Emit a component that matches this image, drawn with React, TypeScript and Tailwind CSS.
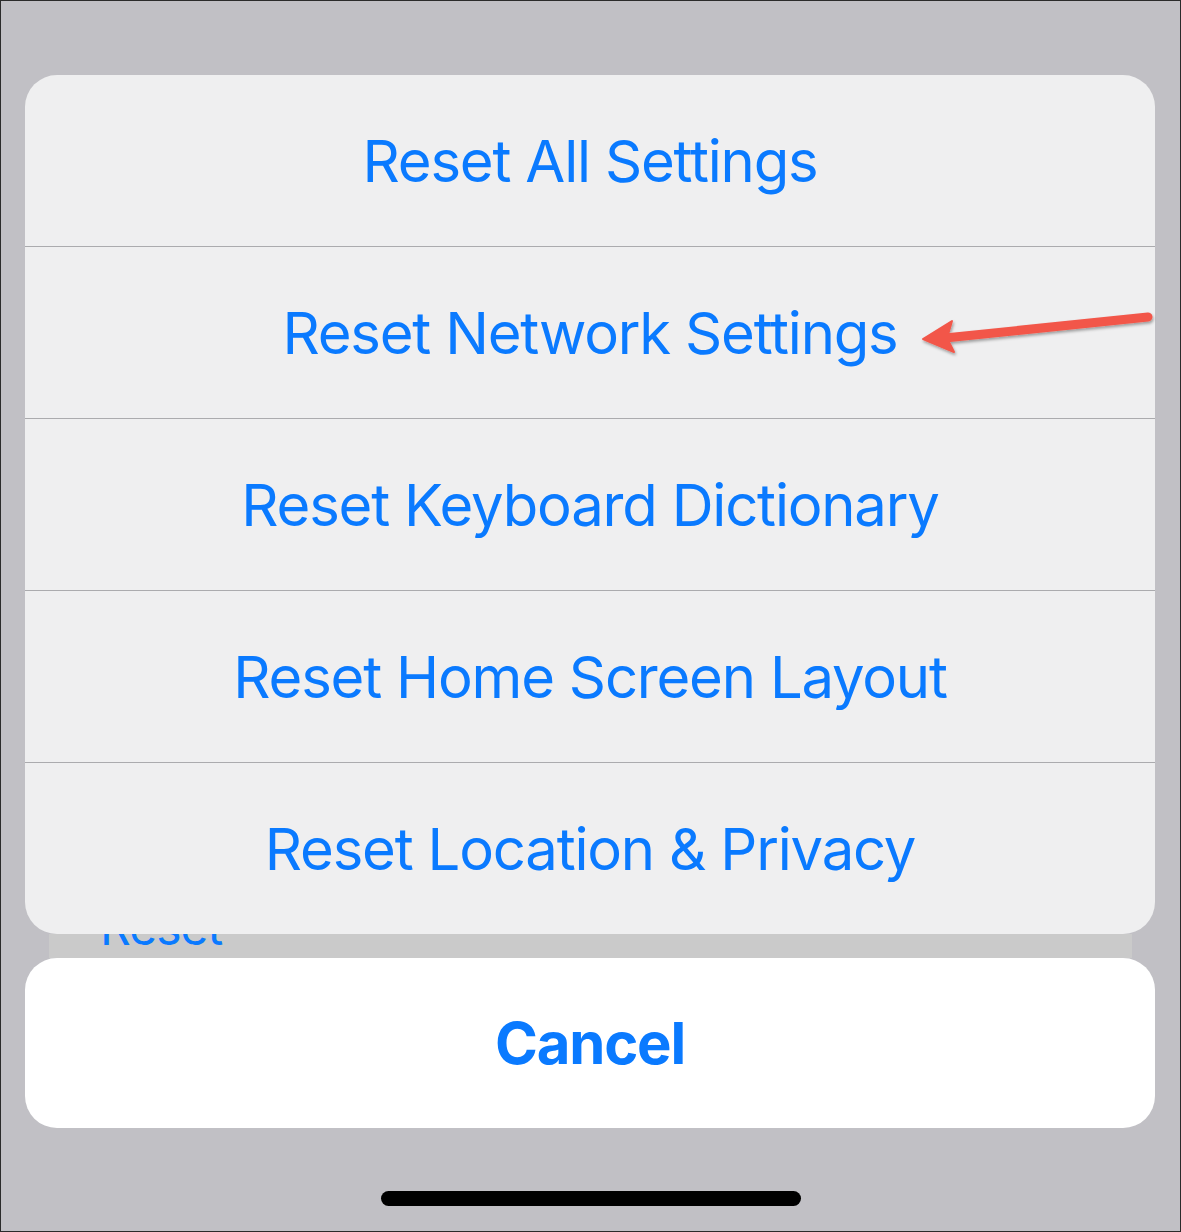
const BLUE = 'text-[#0a7aff]';

const actions = [
  'Reset All Settings',
  'Reset Network Settings',
  'Reset Keyboard Dictionary',
  'Reset Home Screen Layout',
  'Reset Location & Privacy',
];

// Red callout arrow pointing at the network row
function CalloutArrow() {
  return (
    <svg
      className="absolute left-0 top-0 pointer-events-none"
      width="1181"
      height="1232"
      viewBox="0 0 1181 1232"
    >
      <defs>
        <filter id="arrowShadow" x="-10%" y="-50%" width="120%" height="200%">
          <feDropShadow dx="1" dy="2" stdDeviation="1.5" floodColor="#000" floodOpacity="0.35" />
        </filter>
      </defs>
      <g filter="url(#arrowShadow)" fill="#f2574a" stroke="#f2574a">
        <line x1="1147" y1="316" x2="944" y2="337" strokeWidth="9" strokeLinecap="round" />
        <path d="M922 338 L951 320 L946 337 L953 351 Z" strokeWidth="2" strokeLinejoin="round" />
      </g>
    </svg>
  );
}

export default function App() {
  return (
    <div
      className="relative w-[1181px] h-[1232px] bg-[#c1c0c5] border border-[#2b2b2b] flex flex-col overflow-hidden"
      style={{ fontFamily: 'Inter, "Noto Sans", sans-serif' }}
    >
      {/* action sheet */}
      <div className="mt-[74px] ml-[24px] w-[1130px] bg-[#efeff0] rounded-[32px] overflow-hidden">
        {actions.map((label, i) => (
          <div
            key={label}
            className={`flex items-center justify-center ${i === 0 ? 'h-[171px]' : 'h-[172px] border-t border-[#ababae]'}`}
          >
            <span className={`${BLUE} text-[58px] leading-none tracking-[-1.2px]`}>{label}</span>
          </div>
        ))}
      </div>

      {/* settings list peeking out underneath */}
      <div className="ml-[48px] w-[1083px] h-[24px] bg-[#cacaca] overflow-hidden">
        <div className={`${BLUE} -mt-[30px] ml-[51px] text-[48px] leading-none tracking-[-1px]`}>Reset</div>
      </div>

      {/* cancel button */}
      <div className="ml-[24px] w-[1130px] h-[170px] bg-white rounded-[32px] flex items-center justify-center">
        <span className={`${BLUE} text-[58px] font-bold leading-none tracking-[-1.2px]`}>Cancel</span>
      </div>

      {/* home indicator */}
      <div className="mt-[63px] ml-[380px] w-[420px] h-[15px] bg-black rounded-full" />

      <CalloutArrow />
    </div>
  );
}
